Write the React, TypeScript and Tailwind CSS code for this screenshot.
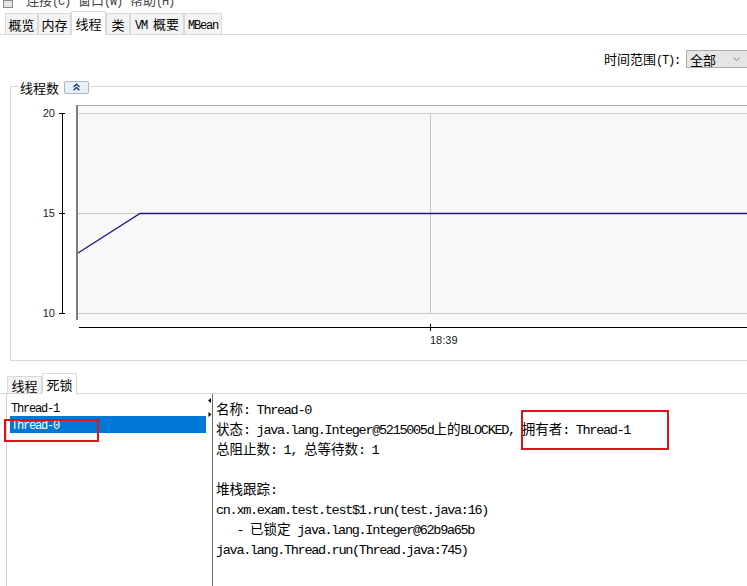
import React from 'react';

const ASCII = /^[\x20-\x7e]+$/;

// Mixed CJK / latin text: latin runs use a narrow monospace like SimSun's half-width glyphs
function Mixed({ text, size = 'md' }: { text: string; size?: 'md' | 'sm' }) {
  const parts = text.split(/([\x20-\x7e]+)/).filter(Boolean);
  return (
    <span className="whitespace-pre">
      {parts.map((p, i) =>
        ASCII.test(p) ? (
          <span
            key={i}
            className={
              size === 'md'
                ? "font-['Liberation_Mono',monospace] tracking-[-1.3px]"
                : "font-['Liberation_Mono',monospace] text-[12px] tracking-[-1.2px]"
            }
          >
            {p}
          </span>
        ) : (
          <span key={i}>{p}</span>
        )
      )}
    </span>
  );
}

const topTabs = [
  { label: '概览', w: 'w-[33px]' },
  { label: '内存', w: 'w-[33px]' },
  { label: '线程', w: 'w-[35px]', active: true },
  { label: '类', w: 'w-[24px]' },
  { label: 'VM 概要', w: 'w-[54px]' },
  { label: 'MBean', w: 'w-[38px]' },
];

const detailLines = [
  '名称: Thread-0',
  '状态: java.lang.Integer@5215005d上的BLOCKED, 拥有者: Thread-1',
  '总阻止数: 1, 总等待数: 1',
  '',
  '堆栈跟踪: ',
  'cn.xm.exam.test.test$1.run(test.java:16)',
  '   - 已锁定 java.lang.Integer@62b9a65b',
  'java.lang.Thread.run(Thread.java:745)',
];

function ThreadChart() {
  return (
    <svg width="736" height="274" viewBox="11 87 736 274" className="block">
      {/* y axis */}
      <line x1="62.5" y1="113" x2="62.5" y2="314" stroke="#000" />
      {[113, 213, 313].map((y) => (
        <line key={y} x1="59" y1={y + 0.5} x2="65" y2={y + 0.5} stroke="#000" />
      ))}
      {[
        ['20', 113],
        ['15', 213],
        ['10', 313],
      ].map(([t, y]) => (
        <text
          key={t}
          x="55"
          y={(y as number) + 4}
          textAnchor="end"
          fontSize="11"
          fontFamily="'Liberation Sans', sans-serif"
          fill="#222"
        >
          {t}
        </text>
      ))}

      {/* plot area */}
      <rect x="76" y="105" width="700" height="215" fill="#f8f8f8" />
      <line x1="76" y1="105.5" x2="760" y2="105.5" stroke="#a9a9a9" />
      <line x1="78" y1="113.5" x2="760" y2="113.5" stroke="#cfcfcf" />
      <line x1="78" y1="213.5" x2="760" y2="213.5" stroke="#c6c6c6" />
      <line x1="78" y1="313.5" x2="760" y2="313.5" stroke="#c6c6c6" />
      <line x1="430.5" y1="113" x2="430.5" y2="313" stroke="#c6c6c6" />
      <line x1="77" y1="105" x2="77" y2="320" stroke="#7c7c7c" strokeWidth="2" />

      {/* data */}
      <polyline points="78,253 140,213.5 760,213.5" fill="none" stroke="#1e1a7a" strokeWidth="1.3" />

      {/* x axis */}
      <line x1="79" y1="327.5" x2="760" y2="327.5" stroke="#000" />
      <line x1="430.5" y1="324" x2="430.5" y2="331" stroke="#000" />
      <text x="430" y="344" fontSize="11" fontFamily="'Liberation Sans', sans-serif" fill="#222">
        18:39
      </text>
    </svg>
  );
}

export default function App() {
  return (
    <div className="relative w-[747px] h-[586px] overflow-hidden bg-white text-[13px] text-black font-['Noto_Sans_CJK_SC',sans-serif]">
      {/* clipped menu bar */}
      <div className="h-[11px] overflow-hidden flex items-end pl-[3px] gap-[13px] text-[#444]">
        <div className="w-[10px] h-[8px] border border-[#8a8a8a] bg-[#e6e6e6] self-start" />
        <div className="-mt-[12px] flex gap-[8px] leading-[18px]">
          <Mixed text="连接(C)" size="sm" />
          <Mixed text="窗口(W)" size="sm" />
          <Mixed text="帮助(H)" size="sm" />
        </div>
      </div>

      {/* main tabs */}
      <div className="h-[24px] flex items-end pl-[5px] border-b border-[#d9d9d9]">
        {topTabs.map((t) =>
          t.active ? (
            <div
              key={t.label}
              className={`${t.w} h-[24px] -mb-px relative z-10 bg-white border border-b-0 border-[#d9d9d9] flex items-center justify-center leading-none`}
            >
              <Mixed text={t.label} size="sm" />
            </div>
          ) : (
            <div
              key={t.label}
              className={`${t.w} h-[21px] bg-[#f3f3f3] border border-b-0 border-[#d9d9d9] flex items-center justify-center leading-none`}
            >
              <Mixed text={t.label} size="sm" />
            </div>
          )
        )}
      </div>

      {/* time range */}
      <div className="mt-[15px] h-[18px] flex justify-end items-center">
        <span className="leading-none">
          <Mixed text="时间范围(T):" size="sm" />
        </span>
        <div className="ml-[6px] -mr-[9px] w-[70px] h-[18px] border border-[#adadad] bg-[#e5e5e5] flex items-center pl-[3px] leading-none">
          <span>全部</span>
          <svg width="7" height="4" viewBox="0 0 7 4" className="ml-auto mr-[15px]">
            <polyline points="0.5,0.5 3.5,3.5 6.5,0.5" fill="none" stroke="#808080" />
          </svg>
        </div>
      </div>

      {/* chart group */}
      <div className="relative ml-[10px] mt-[18px] h-[275px] border-l border-y border-[#d6d6d6]">
        <div className="absolute left-[7px] -top-[8px] flex items-center gap-[5px] bg-white px-[2px] h-[16px] leading-none">
          <span>线程数</span>
          <div className="w-[25px] h-[13px] rounded-[2px] border border-[#a9b7cc] bg-[#eaf0f8] flex items-center justify-center">
            <svg width="9" height="8" viewBox="0 0 9 8">
              <polyline points="1.5,4 4.5,1.2 7.5,4" fill="none" stroke="#1f3a6e" strokeWidth="1.3" />
              <polyline points="1.5,7.3 4.5,4.5 7.5,7.3" fill="none" stroke="#1f3a6e" strokeWidth="1.3" />
            </svg>
          </div>
        </div>
        <ThreadChart />
      </div>

      {/* lower tabs */}
      <div className="mt-[10px] h-[23px] flex items-end pl-[7px] border-b border-[#d9d9d9]">
        <div className="w-[35px] h-[17px] bg-[#f3f3f3] border border-b-0 border-[#d9d9d9] flex items-center justify-center leading-none">
          线程
        </div>
        <div className="w-[35px] h-[21px] -mb-px relative z-10 bg-white border border-b-0 border-[#d9d9d9] flex items-center justify-center leading-none">
          死锁
        </div>
      </div>

      {/* split pane */}
      <div className="flex h-[192px]">
        <div className="ml-[6px] w-[201px] border-l border-[#d0d0d0] pt-[5px] pl-[3px] pr-[1px]">
          <div className="h-[17px] flex items-center pl-[1px] leading-none">
            <Mixed text="Thread-1" size="sm" />
          </div>
          <div className="h-[17px] flex items-center pl-[1px] leading-none bg-[#0078d7] text-white">
            <Mixed text="Thread-0" size="sm" />
          </div>
        </div>
        <div className="w-[5px]">
          <svg width="5" height="26" viewBox="0 0 5 26" className="block">
            <polygon points="4,4 1,6.5 4,9" fill="#000" />
            <polygon points="1.5,18 4.5,20.5 1.5,23" fill="#000" />
          </svg>
        </div>
        <div className="flex-1 border-l border-[#6b6b6b] pl-[3px] pt-[4px] text-[13.5px] leading-[20px]">
          {detailLines.map((line, i) => (
            <div key={i} className="h-[20px]">
              <Mixed text={line} />
            </div>
          ))}
        </div>
      </div>

      {/* red annotation boxes */}
      <div className="absolute left-[4px] top-[419px] w-[95px] h-[23px] border-2 border-[#e0121c]" />
      <div className="absolute left-[521px] top-[410px] w-[148px] h-[40px] border-2 border-[#e0121c]" />
    </div>
  );
}
